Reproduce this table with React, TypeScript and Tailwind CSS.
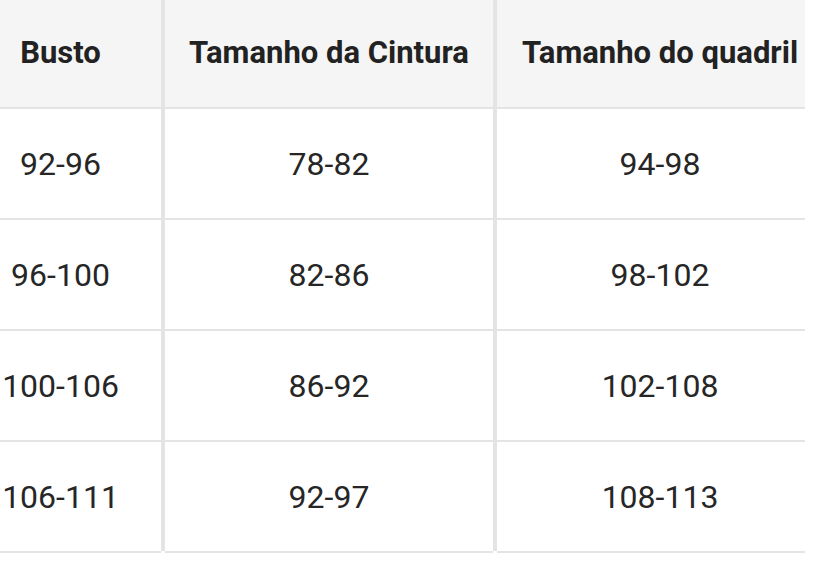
const rows = [
  ['92-96', '78-82', '94-98'],
  ['96-100', '82-86', '98-102'],
  ['100-106', '86-92', '102-108'],
  ['106-111', '92-97', '108-113'],
];

function Sep({ last }: { last?: boolean }) {
  return <div className={`w-[4px] shrink-0 bg-[#e4e4e4] ${last ? 'mb-[2px]' : ''}`} />;
}

export default function App() {
  return (
    <div className="w-[838px] h-[570px] bg-white" style={{ fontFamily: 'Roboto, "Noto Sans", sans-serif' }}>
      <div className="w-[805px] overflow-hidden">
        <div className="ml-[-40px] w-[870px]">
          {/* Header */}
          <div className="flex bg-[#f5f5f5] text-[#222] font-bold text-[31px]">
            <div className="w-[201px] h-[109px] flex items-center justify-center border-b-2 border-[#e4e4e4]">Busto</div>
            <Sep />
            <div className="w-[328px] h-[109px] flex items-center justify-center border-b-2 border-[#e4e4e4] whitespace-nowrap">Tamanho da Cintura</div>
            <Sep />
            <div className="w-[326px] h-[109px] flex items-center justify-center border-b-2 border-[#e4e4e4] whitespace-nowrap">Tamanho do quadril</div>
          </div>

          {/* Body */}
          {rows.map((r, i) => {
            const last = i === rows.length - 1;
            return (
              <div key={i} className="flex text-[#262626] text-[32px]">
                <div className="w-[201px] h-[111px] flex items-center justify-center border-b-2 border-[#e4e4e4]">{r[0]}</div>
                <Sep last={last} />
                <div className="w-[328px] h-[111px] flex items-center justify-center border-b-2 border-[#e4e4e4]">{r[1]}</div>
                <Sep last={last} />
                <div className="w-[326px] h-[111px] flex items-center justify-center border-b-2 border-[#e4e4e4]">{r[2]}</div>
              </div>
            );
          })}
        </div>
      </div>
    </div>
  );
}
